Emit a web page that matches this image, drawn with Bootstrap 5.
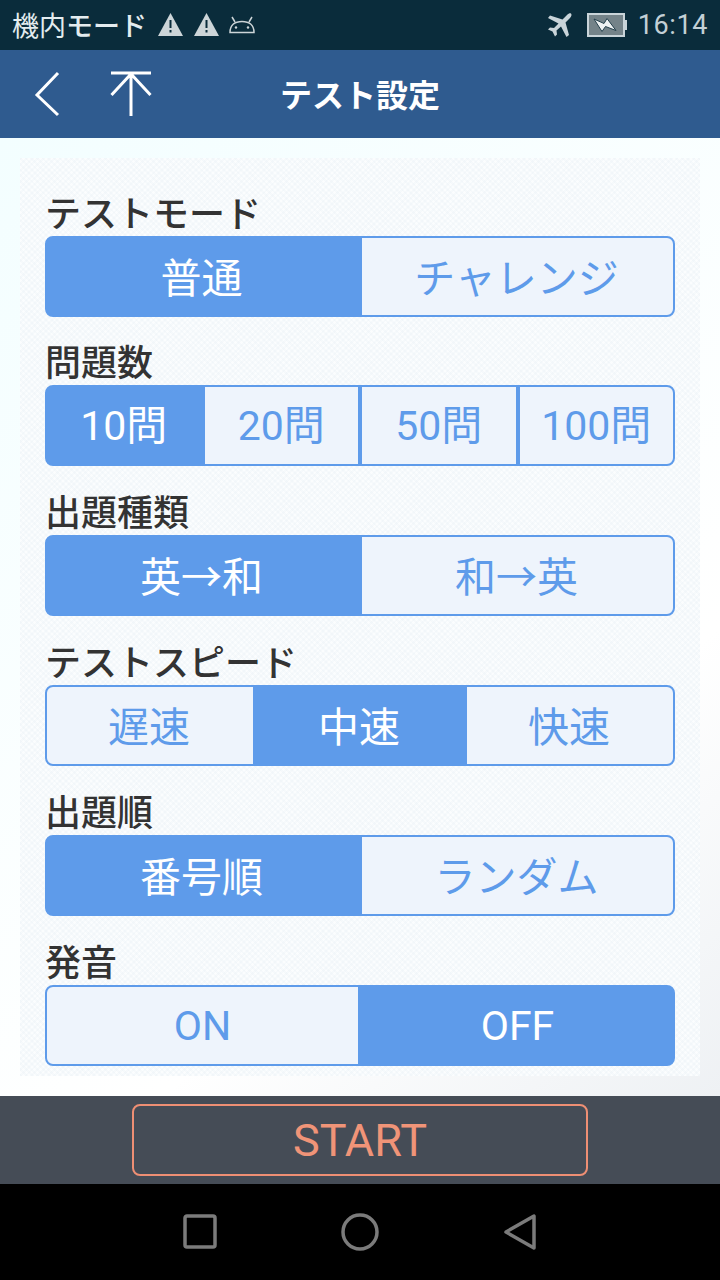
<!DOCTYPE html>
<html lang="ja">
<head>
    <meta charset="UTF-8">
    <meta name="viewport" content="width=device-width, initial-scale=1.0">
    <title>テスト設定</title>
    <link href="https://cdn.jsdelivr.net/npm/bootstrap@5.3.0/dist/css/bootstrap.min.css" rel="stylesheet">
    <style>
        html, body { width: 720px; height: 1280px; overflow: hidden; }
        body { font-family: "Noto Sans CJK JP", "Noto Sans", sans-serif; background: #000; }
        .status-bar { height: 50px; background: #0a2c3b; padding: 0 12px; color: #e4ecef; }
        .status-text { font-size: 27px; line-height: 50px; }
        .status-kana { font-weight: 500; }
        .status-left-icons { margin-left: 11px; }
        .status-time { font-family: Roboto, sans-serif; font-size: 27px; color: #c3d0d6; letter-spacing: .6px; margin-left: 10px; }
        .status-battery { margin-left: 13px; }
        .app-header { height: 88px; background: #2f5b8f; color: #fff; }
        .app-title { font-size: 32px; font-weight: 700; line-height: 86px; }
        .header-icons { left: 0; top: 0; }
        .settings-body { height: 958px; padding: 20px 20px; background: linear-gradient(140deg, #f3feff 0%, #ffffff 70%, #eef1f4 100%); }
        .settings-panel {
            height: 918px; padding: 0 25px;
            background-color: #fbfdfe;
            background-image:
                repeating-linear-gradient(45deg, rgba(225, 235, 242, .2) 0 2px, transparent 2px 4px),
                repeating-linear-gradient(-45deg, rgba(225, 235, 242, .2) 0 2px, transparent 2px 4px);
        }
        .setting-label { height: 69px; padding-bottom: 7px; font-size: 36px; font-weight: 500; line-height: 1; color: #333; }
        .setting-label.first-label { height: 78px; }
        .setting-label.tight-label { height: 68px; }
        .seg-group { --bs-border-width: 0px; height: 81px; }
        .btn-group > .seg-btn {
            --bs-btn-color: #5e9bea; --bs-btn-bg: #eef4fc; --bs-btn-border-color: #5e9bea;
            --bs-btn-active-color: #fff; --bs-btn-active-bg: #5e9bea; --bs-btn-active-border-color: #5e9bea;
            --bs-btn-hover-color: #5e9bea; --bs-btn-hover-bg: #eef4fc; --bs-btn-hover-border-color: #5e9bea;
            --bs-btn-border-width: 2px; --bs-btn-border-radius: 8px;
            flex: 1 1 0; padding: 0 2px 0 0; font-size: 41px; line-height: 75px; white-space: nowrap;
        }
        .btn-group > .seg-roman { font-family: Roboto, "Noto Sans CJK JP", sans-serif; padding: 2px 0 0 0; }
        .footer-bar { height: 88px; background: #454c56; }
        .start-btn {
            --bs-btn-color: #f09478; --bs-btn-border-color: #ee8f74; --bs-btn-hover-color: #f09478;
            --bs-btn-hover-bg: transparent; --bs-btn-hover-border-color: #ee8f74;
            --bs-btn-border-width: 2px; --bs-btn-border-radius: 8px;
            width: 456px; height: 72px; padding: 2px 0 0; font-family: Roboto, sans-serif; font-size: 45px; font-weight: 400; line-height: 66px;
        }
        .nav-bar { height: 96px; background: #000; gap: 123px; }
    </style>
</head>
<body>
    <div class="status-bar d-flex align-items-center">
        <span class="status-text">機内<span class="status-kana">モード</span></span>
        <svg class="status-left-icons" width="98" height="28" viewBox="0 0 98 28">
            <path d="M12.500 2 L25 25 H0 Z" fill="#cdd5d8"/>
            <rect x="11.500" y="9" width="2" height="8" fill="#0a2c3b"/><rect x="11.500" y="19" width="2" height="2.500" fill="#0a2c3b"/>
            <path d="M48.500 2 L61 25 H36 Z" fill="#cdd5d8"/>
            <rect x="47.500" y="9" width="2" height="8" fill="#0a2c3b"/><rect x="47.500" y="19" width="2" height="2.500" fill="#0a2c3b"/>
            <path d="M72 21.500 C72 14 77 10.500 84 10.500 C91 10.500 96 14 96 21.500 Z" fill="none" stroke="#cdd5d8" stroke-width="1.500"/>
            <path d="M74 6 L77 11 M94 6 L91 11" fill="none" stroke="#cdd5d8" stroke-width="1.500"/>
            <circle cx="78" cy="16.500" r="1.200" fill="#cdd5d8"/><circle cx="90" cy="16.500" r="1.200" fill="#cdd5d8"/>
        </svg>
        <div class="ms-auto d-flex align-items-center">
            <svg width="26" height="26" viewBox="0 0 26 26">
                <path d="M24 1.500 C25 2.500 24.500 4.500 23 6 L18.500 10.500 L22 23 L19.500 25 L14 14.500 L9.500 18.500 L10 22.500 L8 24.500 L5.500 19.500 L1 17.500 L3 15.500 L7 16 L11.500 11.500 L1 6 L3 3.500 L15.500 7.500 L20 3 C21.500 1.500 23 .800 24 1.500 Z" fill="#c9d4d9"/>
            </svg>
            <svg class="status-battery" width="42" height="26" viewBox="0 0 42 26">
                <rect x="2" y="2" width="36" height="22" fill="#748389" stroke="#c9d4d9" stroke-width="2"/>
                <rect x="38" y="8" width="3" height="10" fill="#c9d4d9"/>
                <path d="M8 7 L18 11.500 L21 6.500 L30 18.500 L19.500 14.500 L16 19.500 Z" fill="#eef2f3" stroke="#24404c" stroke-width="1"/>
            </svg>
            <span class="status-time">16:14</span>
        </div>
    </div>

    <div class="app-header position-relative text-center">
        <svg class="position-absolute header-icons" width="170" height="88" viewBox="0 0 170 88">
            <path d="M58 23 L37 45 L58 65" fill="none" stroke="#fff" stroke-width="3"/>
            <path d="M111 23 H151 M131 23 V66 M111.500 45 L131 24 L150.500 45" fill="none" stroke="#fff" stroke-width="3"/>
        </svg>
        <div class="app-title">テスト設定</div>
    </div>

    <div class="settings-body">
        <div class="settings-panel">
            <div class="setting-label first-label d-flex align-items-end">テストモード</div>
            <div class="btn-group seg-group w-100">
                <input type="radio" class="btn-check" name="mode" id="mode1" checked>
                <label class="btn seg-btn" for="mode1">普通</label>
                <input type="radio" class="btn-check" name="mode" id="mode2">
                <label class="btn seg-btn" for="mode2">チャレンジ</label>
            </div>

            <div class="setting-label tight-label d-flex align-items-end">問題数</div>
            <div class="btn-group seg-group w-100">
                <input type="radio" class="btn-check" name="count" id="count1" checked>
                <label class="btn seg-btn seg-roman" for="count1">10問</label>
                <input type="radio" class="btn-check" name="count" id="count2">
                <label class="btn seg-btn seg-roman" for="count2">20問</label>
                <input type="radio" class="btn-check" name="count" id="count3">
                <label class="btn seg-btn seg-roman" for="count3">50問</label>
                <input type="radio" class="btn-check" name="count" id="count4">
                <label class="btn seg-btn seg-roman" for="count4">100問</label>
            </div>

            <div class="setting-label d-flex align-items-end">出題種類</div>
            <div class="btn-group seg-group w-100">
                <input type="radio" class="btn-check" name="kind" id="kind1" checked>
                <label class="btn seg-btn" for="kind1">英→和</label>
                <input type="radio" class="btn-check" name="kind" id="kind2">
                <label class="btn seg-btn" for="kind2">和→英</label>
            </div>

            <div class="setting-label d-flex align-items-end">テストスピード</div>
            <div class="btn-group seg-group w-100">
                <input type="radio" class="btn-check" name="speed" id="speed1">
                <label class="btn seg-btn" for="speed1">遅速</label>
                <input type="radio" class="btn-check" name="speed" id="speed2" checked>
                <label class="btn seg-btn" for="speed2">中速</label>
                <input type="radio" class="btn-check" name="speed" id="speed3">
                <label class="btn seg-btn" for="speed3">快速</label>
            </div>

            <div class="setting-label d-flex align-items-end">出題順</div>
            <div class="btn-group seg-group w-100">
                <input type="radio" class="btn-check" name="order" id="order1" checked>
                <label class="btn seg-btn" for="order1">番号順</label>
                <input type="radio" class="btn-check" name="order" id="order2">
                <label class="btn seg-btn" for="order2">ランダム</label>
            </div>

            <div class="setting-label d-flex align-items-end">発音</div>
            <div class="btn-group seg-group w-100">
                <input type="radio" class="btn-check" name="voice" id="voice1">
                <label class="btn seg-btn seg-roman" for="voice1">ON</label>
                <input type="radio" class="btn-check" name="voice" id="voice2" checked>
                <label class="btn seg-btn seg-roman" for="voice2">OFF</label>
            </div>
        </div>
    </div>

    <div class="footer-bar d-flex align-items-center justify-content-center">
        <button class="btn start-btn" type="button">START</button>
    </div>

    <div class="nav-bar d-flex align-items-center justify-content-center">
        <svg width="36" height="36" viewBox="0 0 36 36"><rect x="3" y="2" width="30" height="31" rx="2" fill="none" stroke="#7b7b7b" stroke-width="3.500"/></svg>
        <svg width="38" height="38" viewBox="0 0 38 38"><circle cx="19" cy="19" r="17" fill="none" stroke="#7b7b7b" stroke-width="3.500"/></svg>
        <svg width="36" height="38" viewBox="0 0 36 38"><path d="M32 3 V35 L4 19 Z" fill="none" stroke="#7b7b7b" stroke-width="3.500" stroke-linejoin="round"/></svg>
    </div>
    <script src="https://cdn.jsdelivr.net/npm/bootstrap@5.3.0/dist/js/bootstrap.bundle.min.js"></script>
</body>
</html>
